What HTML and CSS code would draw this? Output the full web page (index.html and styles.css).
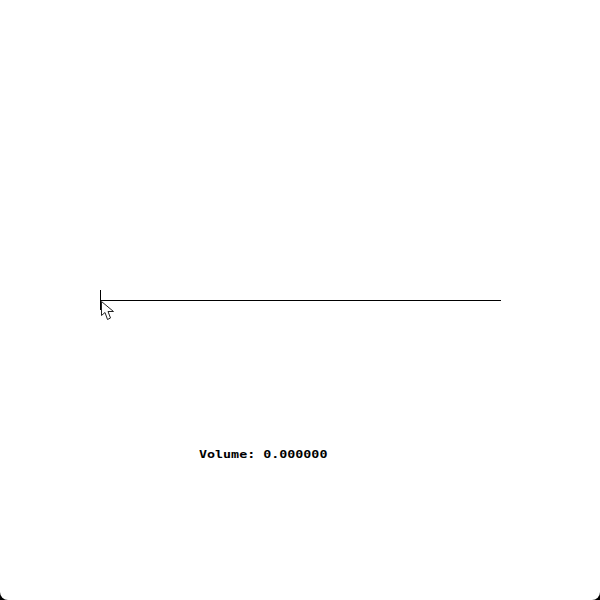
FILE: index.html
```html
<!DOCTYPE html>
<html lang="en">
<head>
<meta charset="utf-8">
<title>Volume</title>
<link rel="stylesheet" href="styles.css">
</head>
<body>
<main class="screen">
  <div class="slider">
    <div class="track"></div>
    <div class="thumb"></div>
    <svg class="cursor" width="14" height="21" viewBox="0 0 14 21">
      <path d="M0.5 0.5V14.5L4 11.5L6.5 18.5L9.5 17L7 10.5H12.5L0.5 0.5Z" fill="#fff" stroke="#222" stroke-width="1"/>
    </svg>
  </div>
  <p class="readout">Volume: 0.000000</p>
</main>
</body>
</html>
```
FILE: styles.css
```css
html, body {
  margin: 0;
  height: 600px;
  background: #000;
  overflow: hidden;
}
.screen {
  box-sizing: border-box;
  height: 600px;
  padding: 290px 0 0 100px;
  background: #fff;
  border-radius: 0 0 8px 8px;
  display: flex;
  flex-direction: column;
  align-items: flex-start;
}
.slider {
  position: relative;
  width: 401px;
  height: 24px;
}
.track {
  margin-top: 10px;
  height: 1px;
  background: #000;
}
.thumb {
  position: absolute;
  left: 0;
  top: 0;
  width: 1px;
  height: 20px;
  background: #000;
}
.cursor {
  position: absolute;
  left: 1px;
  top: 11px;
}
.readout {
  margin: 134px 0 0 99px;
  font: bold 11px/14px "DejaVu Sans Mono", monospace;
  transform: scaleX(1.212);
  transform-origin: 0 0;
  color: #000;
  white-space: pre;
}
```
